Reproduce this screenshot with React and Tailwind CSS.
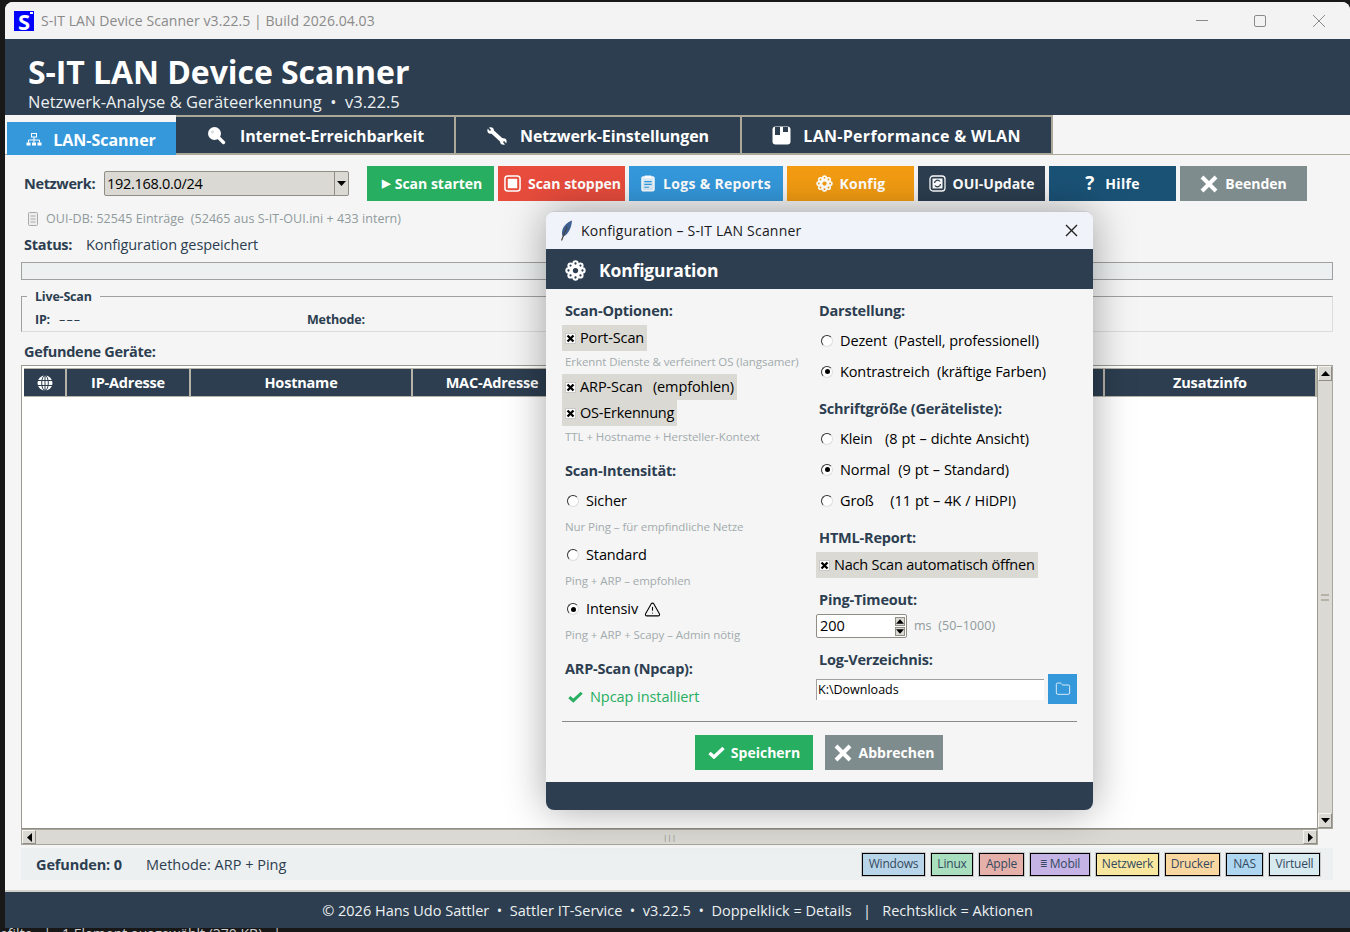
import { Folder, TriangleAlert } from "lucide-react";

const fontBase = "font-['Open_Sans','Noto_Sans',sans-serif]";

function Flower({ size = 20, color = "white", bg = "#2c3e50" }) {
  const petals = [0, 45, 90, 135, 180, 225, 270, 315];
  return (
    <svg width={size} height={size} viewBox="0 0 24 24" className="shrink-0">
      {petals.map((a) => (
        <circle
          key={a}
          cx={12 + 8 * Math.cos((a * Math.PI) / 180)}
          cy={12 + 8 * Math.sin((a * Math.PI) / 180)}
          r="3.6"
          fill={color}
        />
      ))}
      <circle cx="12" cy="12" r="6.4" fill={color} />
      <circle cx="12" cy="12" r="3" fill={bg} />
      {petals.map((a) => (
        <circle
          key={a}
          cx={12 + 8 * Math.cos((a * Math.PI) / 180)}
          cy={12 + 8 * Math.sin((a * Math.PI) / 180)}
          r="1.3"
          fill={bg}
        />
      ))}
    </svg>
  );
}

function NetIcon() {
  return (
    <svg width="16" height="13" viewBox="0 0 16 13" className="shrink-0">
      <rect x="5.500" y="0.500" width="5" height="3.500" fill="none" stroke="white" strokeWidth="1" />
      <path d="M8 4v3M2.500 9.500V7h11v2.500M8 7v2.500" stroke="white" strokeWidth="1" fill="none" />
      <rect x="0.500" y="9.500" width="4" height="3" fill="white" />
      <rect x="6" y="9.500" width="4" height="3" fill="white" />
      <rect x="11.500" y="9.500" width="4" height="3" fill="white" />
    </svg>
  );
}

function SearchIcon() {
  return (
    <svg width="19" height="19" viewBox="0 0 19 19" className="shrink-0 ml-px">
      <path d="M10 10l6.500 6.500" stroke="white" strokeWidth="3.400" strokeLinecap="round" />
      <circle cx="7.500" cy="7.500" r="6.500" fill="white" />
      <circle cx="5.500" cy="6" r="1.600" fill="#d5dde3" />
    </svg>
  );
}

function WrenchIcon() {
  return (
    <svg width="20" height="18" viewBox="0 0 20 18" className="shrink-0">
      <path d="M4 3.500l12 11" stroke="white" strokeWidth="4" />
      <circle cx="3.600" cy="3.500" r="3.200" fill="white" />
      <circle cx="16.400" cy="14.500" r="3.200" fill="white" />
      <path d="M0.500 0l3 3.500" stroke="#2c3e50" strokeWidth="1.600" />
      <path d="M19.500 18l-3-3.500" stroke="#2c3e50" strokeWidth="1.600" />
    </svg>
  );
}

function DiskIcon() {
  return (
    <svg width="19" height="19" viewBox="0 0 19 19" className="shrink-0">
      <rect x="0.500" y="0.500" width="18" height="18" rx="3" fill="white" />
      <rect x="3" y="1" width="5" height="8" fill="#2c3e50" />
      <rect x="11" y="1" width="5" height="5" fill="#2c3e50" />
    </svg>
  );
}

function StopIcon() {
  return (
    <svg width="17" height="17" viewBox="0 0 18 18" className="shrink-0">
      <rect x="1" y="1" width="16" height="16" rx="3" fill="none" stroke="white" strokeWidth="1.600" />
      <rect x="4" y="4" width="10" height="10" fill="white" />
    </svg>
  );
}

function ClipIcon() {
  return (
    <svg width="14" height="17" viewBox="0 0 15 18" className="shrink-0">
      <rect x="1" y="2" width="13" height="15" rx="1.500" fill="#d9ecf8" stroke="white" strokeWidth="1.400" />
      <rect x="4" y="0.500" width="7" height="3" fill="white" />
      <path d="M3.500 7h8M3.500 10h8M3.500 13h5" stroke="#3498db" strokeWidth="1.200" />
    </svg>
  );
}

function RefreshIcon() {
  return (
    <svg width="17" height="17" viewBox="0 0 17 17" className="shrink-0">
      <rect x="1" y="1" width="15" height="15" rx="3" fill="none" stroke="white" strokeWidth="1.300" />
      <rect x="3.500" y="3.500" width="10" height="10" fill="white" />
      <path d="M5.500 8a3 3 0 0 1 5.500-1.500M11.500 9a3 3 0 0 1-5.500 1.500" fill="none" stroke="#2c3e50" strokeWidth="1.300" />
    </svg>
  );
}

function HeavyX({ size = 18 }) {
  return (
    <svg width={size} height={size} viewBox="0 0 18 18" className="shrink-0">
      <path d="M2 2l14 14M16 2L2 16" stroke="white" strokeWidth="4" />
    </svg>
  );
}

function Check({ color = "white", w = 17 }) {
  return (
    <svg width={w} height={(w * 13) / 17} viewBox="0 0 17 13" className="shrink-0">
      <path d="M1.500 7l4.500 4L15.500 2" fill="none" stroke={color} strokeWidth="3.400" />
    </svg>
  );
}

function Feather() {
  return (
    <svg width="13" height="21" viewBox="0 0 13 21" className="shrink-0">
      <path d="M12 0.500C7 2 2.500 7 2 12c-.2 2 .2 3.500 1 4.500C8 15 11.500 8 12 0.500z" fill="#3d5f8f" />
      <path d="M7 7L1.500 20.500" stroke="#444" strokeWidth="1.200" />
    </svg>
  );
}

function GlobeIcon() {
  return (
    <svg width="16" height="16" viewBox="0 0 16 16">
      <circle cx="8" cy="8" r="7.500" fill="white" />
      <ellipse cx="8" cy="8" rx="3.300" ry="7.500" fill="none" stroke="#2c3e50" strokeWidth="1" />
      <path d="M8 .5v15M1 5.500h14M1 10.500h14" stroke="#2c3e50" strokeWidth="1" />
    </svg>
  );
}

function Arrow({ dir }) {
  const pts = {
    up: "0,6 9,6 4.500,1",
    down: "0,1 9,1 4.500,6",
    left: "6,0 6,9 1,4.500",
    right: "1,0 1,9 6,4.500",
  };
  const vertical = dir === "up" || dir === "down";
  return (
    <svg width={vertical ? 9 : 7} height={vertical ? 7 : 9} viewBox={vertical ? "0 0 9 7" : "0 0 7 9"}>
      <polygon points={pts[dir]} fill="black" />
    </svg>
  );
}

function ScrollBtn({ dir, className = "" }) {
  return (
    <div className={`flex items-center justify-center shrink-0 bg-[#dad9d3] border-t border-l border-[#f4f4f0] border-r border-b border-r-[#8f8d84] border-b-[#8f8d84] ${className}`}>
      <Arrow dir={dir} />
    </div>
  );
}

function ToolButton({ color, width, gap = "gap-[7px]", children }) {
  return (
    <div className={`flex items-center justify-center h-[35px] text-white font-bold text-[14px] shrink-0 ${gap} ${color} ${width}`}>
      {children}
    </div>
  );
}

function Tab({ width, icon, label, track = "tracking-[-0.1px]", gap = "gap-[14px]" }) {
  return (
    <div className={`flex items-center justify-center pt-px h-[39px] bg-[#2c3e50] border-t-2 border-r-2 border-b border-[#aca899] text-white font-bold text-[16px] shrink-0 ${width} ${track} ${gap}`}>
      {icon}
      {label}
    </div>
  );
}

function Heading({ children, className = "" }) {
  return (
    <div className={`h-[28px] flex items-center font-bold text-[14.5px] tracking-[-0.2px] text-[#2c3e50] ${className}`}>
      {children}
    </div>
  );
}

function Hint({ children, className = "h-[20px] pb-[2px]" }) {
  return (
    <div className={`flex items-center text-[11.5px] tracking-[-0.07px] text-[#a2abad] whitespace-pre ${className}`}>
      {children}
    </div>
  );
}

function CheckRow({ label, track = "tracking-[-0.1px]" }) {
  return (
    <div className={`h-[26px] flex items-center w-fit bg-[#dad9d3] pl-[3px] pr-[3px] gap-[4px] -ml-[3px] text-[14.5px] text-black whitespace-pre ${track}`}>
      <span className="w-[11px] h-[11px] bg-white border border-[#c8c8c8] flex items-center justify-center shrink-0">
        <svg width="9" height="9" viewBox="0 0 9 9">
          <path d="M1.500 1.500l6 6M7.500 1.500l-6 6" stroke="black" strokeWidth="2.300" />
        </svg>
      </span>
      {label}
    </div>
  );
}

function RadioRow({ label, checked, h = "h-[31px]", children }) {
  return (
    <div className={`flex items-center gap-[7px] ml-[2px] text-[14.5px] tracking-[-0.12px] text-black whitespace-pre ${h}`}>
      <span className="w-[12px] h-[12px] rounded-full bg-white border border-t-[#333] border-l-[#333] border-r-[#ddd] border-b-[#ddd] flex items-center justify-center shrink-0">
        {checked && <span className="w-[5px] h-[5px] rounded-full bg-black" />}
      </span>
      {label}
      {children}
    </div>
  );
}

const chips = [
  { label: "Windows", color: "bg-[#b8d4e8]", width: "w-[63px]" },
  { label: "Linux", color: "bg-[#a9dfbf]", width: "w-[42px]" },
  { label: "Apple", color: "bg-[#e6b0aa]", width: "w-[45px]" },
  { label: "Mobil", color: "bg-[#c5b3e6]", width: "w-[60px]", prefix: "≣ " },
  { label: "Netzwerk", color: "bg-[#f9e79f]", width: "w-[63px]" },
  { label: "Drucker", color: "bg-[#fad7a0]", width: "w-[55px]" },
  { label: "NAS", color: "bg-[#aed6f1]", width: "w-[37px]" },
  { label: "Virtuell", color: "bg-[#d6eaf0]", width: "w-[51px]" },
];

function ConfigDialog() {
  return (
    <div className={`absolute left-[546px] top-[211px] w-[547px] h-[599px] rounded-lg overflow-hidden flex flex-col border-t border-[#c8c8c8] shadow-[0_0_40px_rgba(0,0,0,0.35)] ${fontBase}`}>
      <div className="h-[37px] shrink-0 bg-[#f0f3fa] flex items-center pl-[14px] pr-[15px] text-[14px] tracking-[0.2px] text-[#1a1a1a]">
        <Feather />
        <span className="ml-[8px]">Konfiguration – S-IT LAN Scanner</span>
        <svg width="13" height="13" viewBox="0 0 13 13" className="ml-auto">
          <path d="M1 1l11 11M12 1L1 12" stroke="#222" strokeWidth="1.400" />
        </svg>
      </div>
      <div className="h-[40px] shrink-0 pt-[2px] bg-[#2c3e50] flex items-center gap-[13px] pl-[19px] text-white font-bold text-[17.5px] tracking-[-0.15px]">
        <Flower size={21} />
        Konfiguration
      </div>
      <div className="flex-1 bg-[#f5f5f5] pt-[8px] px-[16px] flex flex-col">
        <div className="flex h-[414px]">
          <div className="w-[254px] pl-[3px] shrink-0">
            <Heading>Scan-Optionen:</Heading>
            <CheckRow label="Port-Scan" />
            <Hint className="h-[23px] pb-[2px]">Erkennt Dienste & verfeinert OS (langsamer)</Hint>
            <CheckRow label="ARP-Scan  (empfohlen)" track="tracking-[-0.1px] [word-spacing:1.5px]" />
            <CheckRow label="OS-Erkennung" track="tracking-[-0.25px]" />
            <Hint className="h-[22px]">TTL + Hostname + Hersteller-Kontext</Hint>
            <Heading className="mt-[9px]">Scan-Intensität:</Heading>
            <RadioRow label="Sicher" h="h-[33px] pb-px" />
            <Hint>Nur Ping – für empfindliche Netze</Hint>
            <RadioRow label="Standard" h="h-[34px]" />
            <Hint>Ping + ARP – empfohlen</Hint>
            <RadioRow label="Intensiv" checked h="h-[34px]">
              <TriangleAlert size={17} strokeWidth={1.500} className="-ml-[1px] text-black" />
            </RadioRow>
            <Hint>Ping + ARP + Scapy – Admin nötig</Hint>
            <Heading className="mt-[9px]">ARP-Scan (Npcap):</Heading>
            <div className="h-[28px] flex items-center gap-[7px] pl-[3px] text-[14.5px] tracking-[-0.06px] text-[#27ae60]">
              <Check color="#27ae60" w={15} />
              Npcap installiert
            </div>
          </div>
          <div className="flex-1 pl-[3px]">
            <Heading>Darstellung:</Heading>
            <RadioRow label="Dezent  (Pastell, professionell)" />
            <RadioRow label="Kontrastreich  (kräftige Farben)" checked />
            <Heading className="mt-[8px]">Schriftgröße (Geräteliste):</Heading>
            <RadioRow label="Klein   (8 pt – dichte Ansicht)" h="h-[31px] [word-spacing:0.5px]" />
            <RadioRow label="Normal  (9 pt – Standard)" h="h-[31px] [word-spacing:0.5px]" checked />
            <RadioRow label="Groß    (11 pt – 4K / HiDPI)" h="h-[31px] [word-spacing:0.5px]" />
            <Heading className="mt-[8px]">HTML-Report:</Heading>
            <CheckRow label="Nach Scan automatisch öffnen" track="tracking-[-0.2px]" />
            <Heading className="mt-[8px]">Ping-Timeout:</Heading>
            <div className="flex items-center h-[24px] -ml-[3px]">
              <div className="w-[91px] h-[24px] bg-white border border-[#8f8d84] rounded-[2px] flex items-center justify-between pl-[3px] pr-[1px] text-[14.5px] text-black">
                200
                <div className="flex flex-col gap-[1px]">
                  <span className="w-[10px] h-[9px] bg-[#dad9d3] border border-[#8f8d84] flex items-center justify-center">
                    <Arrow dir="up" />
                  </span>
                  <span className="w-[10px] h-[9px] bg-[#dad9d3] border border-[#8f8d84] flex items-center justify-center">
                    <Arrow dir="down" />
                  </span>
                </div>
              </div>
              <span className="ml-[7px] text-[12.5px] tracking-[0.05px] text-[#8f9a9c] whitespace-pre">ms  (50–1000)</span>
            </div>
            <Heading className="mt-[8px]">Log-Verzeichnis:</Heading>
            <div className="flex items-center h-[30px] -ml-[3px] w-[261px]">
              <div className="w-[228px] h-[21px] pt-px bg-white border-t border-l border-[#a0a0a0] flex items-center pl-[1px] text-[12.5px] text-black">
                K:\Downloads
              </div>
              <div className="ml-[4px] w-[29px] h-[30px] bg-[#3498db] flex items-center justify-center">
                <Folder size={16} strokeWidth={1.200} color="white" />
              </div>
            </div>
          </div>
        </div>
        <div className="mt-[10px] h-px bg-[#8a8a8a]" />
        <div className="mt-[13px] flex justify-center gap-[12px] pr-px">
          <ToolButton color="bg-[#27ae60]" width="w-[118px]" gap="gap-[6px]">
            <Check />
            Speichern
          </ToolButton>
          <ToolButton color="bg-[#7f8c8d]" width="w-[118px]">
            <HeavyX />
            Abbrechen
          </ToolButton>
        </div>
      </div>
      <div className="h-[28px] shrink-0 bg-[#2c3e50]" />
    </div>
  );
}

function App() {
  return (
    <div className={`relative w-[1350px] h-[932px] overflow-hidden bg-[#181818] ${fontBase}`}>
      <div className="ml-[5px] mt-[2px] w-[1345px] h-[926px] rounded-t-lg overflow-hidden flex flex-col bg-[#f5f5f5]">
        <div className="h-[37px] shrink-0 bg-[#f3f3f3] flex items-center pl-[9px] text-[14px] tracking-[0.06px] text-[#8a8a8a]">
          <div className="relative w-[20px] h-[20px] bg-[#0000ff] text-white font-bold text-[22px] leading-none flex items-center justify-center mr-[7px]">
            S
            <span className="absolute right-[1px] top-[1px] w-[3px] h-[2px] bg-white" />
          </div>
          S-IT LAN Device Scanner v3.22.5 | Build 2026.04.03
          <div className="ml-auto flex items-center pr-[25px]">
            <span className="w-[12px] h-px bg-[#8a8a8a]" />
            <span className="ml-[46px] w-[12px] h-[12px] rounded-[2px] border border-[#8a8a8a]" />
            <svg width="12" height="12" viewBox="0 0 12 12" className="ml-[47px]">
              <path d="M0 0l12 12M12 0L0 12" stroke="#8a8a8a" strokeWidth="1" />
            </svg>
          </div>
        </div>

        <div className="h-[76px] shrink-0 bg-[#2c3e50] pl-[23px] text-white flex flex-col">
          <div className="h-[38px] mt-[14px] flex items-center font-bold text-[32px] tracking-[-0.07px] leading-none">S-IT LAN Device Scanner</div>
          <div className="text-[16.5px] leading-[18px] mt-[2px] text-[#ecf0f1] whitespace-pre">Netzwerk-Analyse & Geräteerkennung  •  v3.22.5</div>
        </div>

        <div className="h-[40px] shrink-0 flex items-start pl-[2px] border-b border-[#aca899]">
          <div className="mt-[7px] pt-[2px] w-[169px] h-[33px] bg-[#3498db] flex items-center justify-center gap-[11px] pr-[1px] text-white font-bold text-[16px] shrink-0">
            <NetIcon />
            LAN-Scanner
          </div>
          <Tab width="w-[280px]" icon={<SearchIcon />} label="Internet-Erreichbarkeit" />
          <Tab width="w-[286px]" icon={<WrenchIcon />} label="Netzwerk-Einstellungen" gap="gap-[13px]" />
          <Tab width="w-[311px]" icon={<DiskIcon />} label="LAN-Performance & WLAN" track="tracking-[0.3px]" gap="gap-[12px]" />
        </div>

        <div className="flex-1 flex flex-col pl-[16px] pr-[17px] border-b-2 border-[#d4d2cc]">
          <div className="mt-[11px] flex items-center h-[35px]">
            <div className="w-[83px] pl-[3px] font-bold text-[14.5px] tracking-[-0.35px] text-[#2c3e50]">Netzwerk:</div>
            <div className="w-[245px] h-[25px] bg-[#dad9d3] border border-[#8f8d84] rounded-[2px] flex items-center justify-between pl-[2px] text-[14.5px] tracking-[-0.3px] text-black">
              192.168.0.0/24
              <div className="w-[14px] h-full border-l border-[#8f8d84] flex items-center justify-center">
                <Arrow dir="down" />
              </div>
            </div>
            <div className="ml-[18px] flex gap-[4px]">
              <ToolButton color="bg-[#27ae60]" width="w-[127px]" gap="gap-[5px] pl-[3px]">
                <span className="text-[11px]">▶</span>
                Scan starten
              </ToolButton>
              <ToolButton color="bg-[#e74c3c]" width="w-[127px]" gap="gap-[7px] pl-[2px]">
                <StopIcon />
                Scan stoppen
              </ToolButton>
              <ToolButton color="bg-[#3498db]" width="w-[154px]" gap="gap-[8px]">
                <ClipIcon />
                <span className="tracking-[0.3px]">Logs & Reports</span>
              </ToolButton>
              <ToolButton color="bg-[#f39c12]" width="w-[127px]">
                <Flower size={17} bg="#f39c12" />
                <span className="tracking-[0.2px]">Konfig</span>
              </ToolButton>
              <ToolButton color="bg-[#2c3e50]" width="w-[127px]">
                <RefreshIcon />
                OUI-Update
              </ToolButton>
              <ToolButton color="bg-[#1a5276]" width="w-[127px]" gap="gap-[5px]">
                <span className="font-bold text-[19px] leading-none mr-[6px]">?</span>
                <span className="tracking-[0.3px]">Hilfe</span>
              </ToolButton>
              <ToolButton color="bg-[#7f8c8d]" width="w-[127px]">
                <HeavyX />
                Beenden
              </ToolButton>
            </div>
          </div>

          <div className="mt-[8px] h-[20px] flex items-center gap-[8px] pl-[7px] text-[12.5px] tracking-[0.05px] text-[#8f9a9c] whitespace-pre">
            <svg width="10" height="14" viewBox="0 0 10 14">
              <rect x="0.500" y="0.500" width="9" height="13" rx="1" fill="#eee" stroke="#aaa" />
              <path d="M2.500 4h5M2.500 7h5M2.500 10h5" stroke="#aaa" />
            </svg>
            OUI-DB: 52545 Einträge  (52465 aus S-IT-OUI.ini + 433 intern)
          </div>

          <div className="h-[32px] flex items-center pl-[3px] text-[14.5px] tracking-[-0.1px] text-[#2c3e50]">
            <span className="font-bold w-[62px] tracking-[-0.3px]">Status:</span>
            Konfiguration gespeichert
          </div>

          <div className="mt-[1px] h-[18px] bg-[#ecf0f1] border border-[#a0a0a0]" />

          <div className="relative mt-[16px] h-[36px] border border-t-[#a0a0a0] border-l-[#a0a0a0] border-r-[#dcdcdc] border-b-[#dcdcdc] flex items-end pb-[1px] text-[12.5px] tracking-[-0.2px] font-bold text-[#2c3e50]">
            <span className="absolute left-[5px] -top-[9px] bg-[#f5f5f5] px-[8px] leading-[17px]">Live-Scan</span>
            <span className="ml-[13px] w-[272px] flex items-center gap-[9px]">
              IP:
              <span className="font-normal tracking-[1.2px]">–––</span>
            </span>
            Methode:
          </div>

          <div className="mt-[8px] h-[24px] flex items-center pl-[3px] font-bold text-[14.5px] tracking-[-0.3px] text-[#2c3e50]">Gefundene Geräte:</div>

          <div className="mt-px h-[480px] flex items-start w-[1312px]">
            <div className="w-[1297px] h-[480px] flex flex-col shrink-0">
              <div className="flex-1 bg-white border border-[#9c9a90] border-b-[#8f8d84] pt-[2px] pl-[2px]">
                <div className="flex h-[29px] gap-[2px] border-b border-t border-[#b5b2a8] bg-[#b5b2a8] text-white font-bold text-[14.5px] tracking-[-0.2px]">
                  <div className="w-[41px] bg-[#2c3e50] flex items-center justify-center"><GlobeIcon /></div>
                  <div className="w-[122px] bg-[#2c3e50] flex items-center justify-center">IP-Adresse</div>
                  <div className="w-[220px] bg-[#2c3e50] flex items-center justify-center">Hostname</div>
                  <div className="w-[158px] bg-[#2c3e50] flex items-center justify-center">MAC-Adresse</div>
                  <div className="flex-1 bg-[#2c3e50]" />
                  <div className="w-[210px] bg-[#2c3e50] flex items-center justify-center mr-[2px]">Zusatzinfo</div>
                </div>
              </div>
              <div className="h-[16px] flex items-stretch bg-[#dad9d3] border border-[#a8a59c]">
                <ScrollBtn dir="left" className="w-[14px]" />
                <div className="flex-1 flex items-center justify-center">
                  <span className="text-[8px] leading-none text-[#8f8d84]">|||</span>
                </div>
                <ScrollBtn dir="right" className="w-[14px]" />
              </div>
            </div>
            <div className="w-[15px] h-[464px] flex flex-col bg-[#dad9d3] border-y border-r border-[#a8a59c]">
              <ScrollBtn dir="up" className="h-[15px]" />
              <div className="flex-1 flex items-center justify-center">
                <span className="w-[8px] h-[7px] border-y-2 border-[#b5b2a8]" />
              </div>
              <ScrollBtn dir="down" className="h-[15px]" />
            </div>
          </div>

          <div className="mt-[3px] h-[32px] bg-[#ecf0f1] flex items-center pl-[15px] pr-[13px] text-[14.5px] text-[#2c3e50] shrink-0">
            <span className="font-bold w-[110px] mt-[2px] tracking-[-0.12px]">Gefunden: 0</span>
            <span className="mt-[2px]">Methode: ARP + Ping</span>
            <div className="ml-auto flex gap-[6px]">
              {chips.map((c) => (
                <div
                  key={c.label}
                  className={`h-[23px] border border-black outline outline-[#c8c8c8] flex items-center justify-center text-[12px] tracking-[-0.2px] text-[#34495e] whitespace-pre ${c.color} ${c.width}`}
                >
                  {c.prefix && <span className="text-[9px]">{c.prefix}</span>}
                  {c.label}
                </div>
              ))}
            </div>
          </div>
        </div>

        <div className="h-[36px] shrink-0 pt-px bg-[#2c3e50] flex items-center justify-center text-[14.5px] text-[#ecf0f1] whitespace-pre">
          © 2026 Hans Udo Sattler  •  Sattler IT-Service  •  v3.22.5  •  Doppelklick = Details   |   Rechtsklick = Aktionen
        </div>
      </div>
      <div className="h-[4px] overflow-hidden text-[14px] leading-[12px] text-[#cfcfcf] whitespace-pre">efilte   |   1 Element ausgewählt (370 KB)   |</div>
      <ConfigDialog />
    </div>
  );
}

export default App;
